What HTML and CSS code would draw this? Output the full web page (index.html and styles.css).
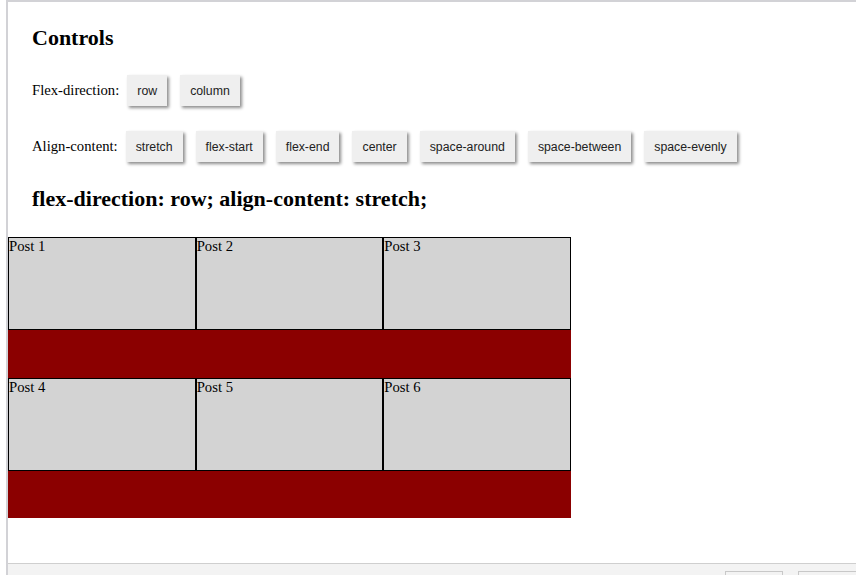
FILE: index.html
```html
<!DOCTYPE html>
<html>
<head>
<meta charset="utf-8">
<link rel="stylesheet" href="styles.css">
</head>
<body>
<div class="shell">
  <div class="frame">
    <div class="controls">
      <h2 class="title">Controls</h2>
      <div class="ctrl-row">
        <span class="label">Flex-direction:</span>
        <button class="btn">row</button>
        <button class="btn">column</button>
      </div>
      <div class="ctrl-row">
        <span class="label">Align-content:</span>
        <button class="btn">stretch</button>
        <button class="btn">flex-start</button>
        <button class="btn">flex-end</button>
        <button class="btn">center</button>
        <button class="btn">space-around</button>
        <button class="btn">space-between</button>
        <button class="btn">space-evenly</button>
      </div>
      <h2 class="status">flex-direction: row; align-content: stretch;</h2>
    </div>
    <div class="posts">
      <div class="post">Post 1</div>
      <div class="post">Post 2</div>
      <div class="post">Post 3</div>
      <div class="post">Post 4</div>
      <div class="post">Post 5</div>
      <div class="post">Post 6</div>
    </div>
  </div>
  <div class="bottombar">
    <span class="tab tab-a"></span>
    <span class="tab tab-b"></span>
  </div>
</div>
</body>
</html>
```
FILE: styles.css
```css
html, body {
  margin: 0;
  padding: 0;
  background: #ffffff;
  overflow: hidden;
}
.shell {
  margin-left: 6px;
  width: 850px;
  height: 575px;
  border-left: 2px solid #d2d2d6;
  border-top: 2px solid #d2d2d6;
  box-sizing: border-box;
  display: flex;
  flex-direction: column;
}
.frame {
  height: 561px;
  background: #ffffff;
  font-family: "Liberation Serif", "Times New Roman", serif;
  font-size: 14.7px;
  color: #000;
}
.controls {
  padding: 23px 24px 0;
  display: flex;
  flex-direction: column;
  align-items: flex-start;
}
.title, .status {
  margin: 0;
  font-size: 22px;
  line-height: 25px;
  font-weight: bold;
}
.ctrl-row {
  display: flex;
  align-items: center;
  gap: 13px;
  margin-top: 25px;
}
.ctrl-row .label {
  margin-right: -5px;
}
.btn {
  font-family: "Liberation Sans", Arial, sans-serif;
  font-size: 12.3px;
  line-height: 14px;
  height: 31px;
  padding: 0 10px;
  border: none;
  border-radius: 0;
  background: #efefef;
  color: #222;
  box-shadow: 2px 2px 3px rgba(0, 0, 0, 0.45);
}
.status {
  margin-top: 24px;
}
.posts {
  margin-top: 26px;
  width: 563px;
  height: 281px;
  background: #8b0000;
  display: flex;
  flex-wrap: wrap;
  align-content: stretch;
}
.post {
  width: 33.3333%;
  height: 93px;
  box-sizing: border-box;
  border: 1px solid #000;
  background: #d3d3d3;
  line-height: 17px;
  padding-top: 0;
}
.bottombar {
  flex: 1;
  border-top: 1px solid #cfcfcf;
  background: #f3f3f3;
  position: relative;
}
.tab {
  position: absolute;
  top: 7px;
  height: 20px;
  border: 1px solid #c8c8c8;
  background: #f3f3f3;
}
.tab-a { left: 717px; width: 56px; }
.tab-b { left: 790px; width: 70px; }
```
